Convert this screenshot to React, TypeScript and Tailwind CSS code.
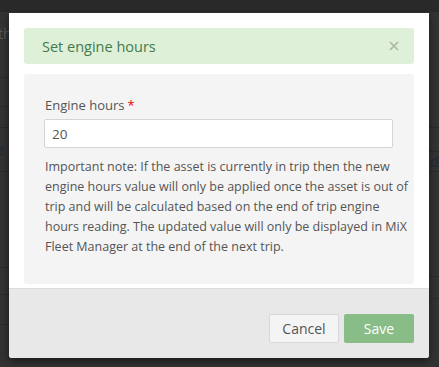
import React from 'react';

const font = { fontFamily: '"Open Sans", "Noto Sans", sans-serif' };

function Backdrop() {
  return (
    <div className="flex h-full flex-col">
      <div className="h-[12px] shrink-0 bg-[#2a2a2a]" />
      <div className="flex flex-1 justify-between bg-[#333]">
        {/* left strip of the page behind */}
        <div className="flex w-[9px] flex-col overflow-hidden whitespace-nowrap text-[14px]">
          <div className="h-[66px] border-b border-[#2a2a2a] pt-[11px] text-[#5a5a5a]">
            <span className="-ml-[2px]">th</span>
          </div>
          <div className="h-[29px] border-b border-[#2a2a2a]" />
          <div className="h-[21px] border-b border-[#2a2a2a]" />
          <div className="flex h-[44px] items-center border-b border-[#2a2a2a] text-[#1f2a3a]">
            <span className="-ml-[4px]">e r</span>
          </div>
          <div className="h-[96px] border-b border-[#2a2a2a]" />
          <div className="h-[27px] border-b border-[#2a2a2a]" />
          <div className="h-[30px] border-b border-[#2a2a2a]" />
        </div>
        {/* right strip */}
        <div className="flex w-[10px] flex-col overflow-hidden whitespace-nowrap text-[14px]">
          <div className="h-[116px] border-b border-[#2a2a2a]" />
          <div className="h-[24px] border-b border-[#2a2a2a]" />
          <div className="flex h-[20px] items-center border-b border-[#2a2a2a] pl-[1px] text-[#1f2a3a]">d</div>
          <div className="h-[105px] border-b border-[#2a2a2a]" />
          <div className="h-[22px] border-b border-[#2a2a2a]" />
        </div>
      </div>
    </div>
  );
}

export default function App() {
  return (
    <div className="relative h-[367px] w-[439px] overflow-hidden bg-[#333]" style={font}>
      <Backdrop />
      <div className="absolute left-[9px] top-[13px] w-[420px] overflow-hidden rounded-b-[3px] bg-white shadow-[0_3px_9px_rgba(0,0,0,0.5)]">
        <div className="px-[15px] pb-[4px] pt-[15px]">
          <div className="flex h-[36px] items-center justify-between rounded-[3px] bg-[#dff0d8] pl-[18px] pr-[15px]">
            <span className="pt-[1px] text-[14.5px] text-[#437a4c]">Set engine hours</span>
            <svg width="10" height="10" viewBox="0 0 10 10" className="text-[#a9b8a6]">
              <path d="M1 1L9 9M9 1L1 9" stroke="currentColor" strokeWidth="1.6" />
            </svg>
          </div>
          <div className="mt-[10px] rounded-[3px] bg-[#f4f4f4] px-[20px] pb-[27px] pt-[21px]">
            <label className="flex flex-col">
              <span className="pl-[1px] text-[13px] leading-[20px] text-[#555]">
                Engine hours<span className="ml-[3px] text-[#e00]">*</span>
              </span>
              <input
                type="text"
                defaultValue="20"
                className="mt-[4px] h-[29px] w-[349px] rounded-[2px] border border-[#d4d4d4] bg-white px-[7px] text-[13.5px] text-[#555] outline-none"
              />
            </label>
            <p className="mt-[9px] whitespace-nowrap pl-[1px] text-[12.5px] leading-[20px] text-[#555]">
              Important note: If the asset is currently in trip then the new
              <br />
              engine hours value will only be applied once the asset is out of
              <br />
              trip and will be calculated based on the end of trip engine
              <br />
              hours reading. The updated value will only be displayed in MiX
              <br />
              Fleet Manager at the end of the next trip.
            </p>
          </div>
        </div>
        <div className="flex h-[70px] justify-end gap-[5px] border-t border-[#dcdcdc] bg-[#e8e8e8] pr-[15px] pt-[25px]">
          <button className="h-[29px] w-[70px] rounded-[2px] border border-[#d8d8d8] bg-[#f4f4f4] text-[14px] text-[#555]">
            Cancel
          </button>
          <button className="h-[29px] w-[70px] rounded-[2px] bg-[#88bd88] text-[14px] text-white">
            Save
          </button>
        </div>
      </div>
    </div>
  );
}
